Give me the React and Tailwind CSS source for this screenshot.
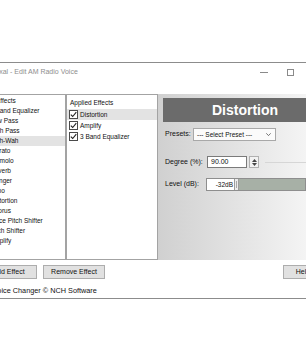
export default function App() {
  const effects = [
    "All Effects",
    "3 Band Equalizer",
    "Low Pass",
    "High Pass",
    "Wah-Wah",
    "Vibrato",
    "Tremolo",
    "Reverb",
    "Flanger",
    "Echo",
    "Distortion",
    "Chorus",
    "Voice Pitch Shifter",
    "Pitch Shifter",
    "Amplify",
  ];
  const applied = ["Distortion", "Amplify", "3 Band Equalizer"];

  const Check = () => (
    <span className="w-[9px] h-[9px] shrink-0 border border-[#4a4a4a] bg-white flex items-center justify-center">
      <svg width="7" height="7" viewBox="0 0 7 7">
        <path d="M0.8 3.6 L2.7 5.5 L6.3 1.2" fill="none" stroke="#222" strokeWidth="1.1" />
      </svg>
    </span>
  );

  return (
    <div className="w-[306px] h-[361px] overflow-hidden bg-white font-['Liberation_Sans',Arial,sans-serif] text-[#111]">
      <div className="h-[62px]" />
      <div className="border-t border-b border-[#8c8c8c] bg-white">
        {/* title bar */}
        <div className="h-[19px] flex items-center">
          <span className="-ml-[9px] text-[7px] text-[#8e8e8e] whitespace-nowrap">Voxal - Edit AM Radio Voice</span>
          <div className="ml-auto flex items-center mr-[12px]">
            <span className="w-[8px] h-px bg-[#8a8a8a]" />
            <span className="ml-[19px] w-[7px] h-[7px] border border-[#8a8a8a]" />
          </div>
        </div>

        {/* main row */}
        <div className="mt-[12px] h-[166px] flex">
          {/* left list */}
          <div className="w-[66px] shrink-0 border-t border-b border-r border-[#a3a3a3] overflow-hidden pt-[1px]">
            {effects.map((e, i) => (
              <div
                key={e}
                className={`h-[10px] leading-[10px] text-[6.5px] whitespace-nowrap ${i === 4 ? "bg-[#e3e3e3]" : ""}`}
              >
                <span className={`${i === 0 ? "-ml-[13px]" : "-ml-[10px]"} inline-block`}>{e}</span>
              </div>
            ))}
          </div>

          {/* applied list */}
          <div className="w-[92px] shrink-0 border border-[#a3a3a3] pt-[2px]">
            <div className="h-[12px] leading-[12px] pl-[3px] text-[6.5px] whitespace-nowrap">Applied Effects</div>
            {applied.map((a, i) => (
              <div
                key={a}
                className={`h-[11px] flex items-center pl-[2px] gap-[2px] text-[6.5px] whitespace-nowrap ${i === 0 ? "bg-[#e3e3e3]" : ""}`}
              >
                <Check />
                <span>{a}</span>
              </div>
            ))}
          </div>

          {/* effect panel */}
          <div className="flex-1 bg-linear-to-r from-[#d0d0d0] to-[#f4f4f4] pt-[4px] overflow-hidden">
            <div className="ml-[5px] w-[164px] h-[24px] bg-[#6b6b6b] flex items-center justify-center">
              <span className="text-[14px] font-bold text-white">Distortion</span>
            </div>

            <div className="pl-[7px] mt-[6px] h-[13px] flex items-center">
              <span className="w-[28px] shrink-0 text-[7px] whitespace-nowrap">Presets:</span>
              <div className="w-[83px] h-[13px] shrink-0 border border-[#a8a8a8] bg-[#fbfbfb] flex items-center justify-between pl-[3px] pr-[4px]">
                <span className="text-[6.5px] whitespace-nowrap">--- Select Preset ---</span>
                <svg width="5" height="3" viewBox="0 0 5 3">
                  <path d="M0.3 0.3 L2.5 2.6 L4.7 0.3" fill="none" stroke="#555" strokeWidth="0.8" />
                </svg>
              </div>
            </div>

            <div className="pl-[7px] mt-[15px] h-[12px] flex items-center">
              <span className="w-[42px] shrink-0 text-[7px] whitespace-nowrap">Degree (%):</span>
              <div className="w-[40px] h-[12px] shrink-0 border border-[#7a7a7a] bg-white flex items-center pl-[3px]">
                <span className="text-[7px]">90.00</span>
              </div>
              <div className="ml-[2px] w-[10px] h-[12px] shrink-0 border border-[#b0b0b0] bg-[#f2f2f2] flex flex-col items-center justify-center gap-[1px]">
                <svg width="5" height="3" viewBox="0 0 5 3">
                  <path d="M0 3 L2.5 0 L5 3 Z" fill="#444" />
                </svg>
                <svg width="5" height="3" viewBox="0 0 5 3">
                  <path d="M0 0 L2.5 3 L5 0 Z" fill="#444" />
                </svg>
              </div>
              <div className="ml-[6px] flex-1 h-px bg-[#d6d6d6]" />
            </div>

            <div className="pl-[7px] mt-[10px] h-[13px] flex items-center">
              <span className="w-[41px] shrink-0 text-[7px] whitespace-nowrap">Level (dB):</span>
              <div className="flex-1 h-[13px] border border-[#8e8e8e] flex">
                <div className="w-[27px] shrink-0 bg-white flex items-center justify-end pr-[1px]">
                  <span className="text-[6.5px]">-32dB</span>
                </div>
                <div className="w-[5px] shrink-0 bg-[#ececec] border-x border-[#9c9c9c] flex justify-center py-[2px]">
                  <span className="w-px h-full bg-[#a8a8a8]" />
                </div>
                <div className="flex-1 bg-[#a7b0a6]" />
              </div>
            </div>
          </div>
        </div>

        {/* buttons */}
        <div className="mt-[5px] h-[14px] flex">
          <div className="-ml-[20px] w-[57px] shrink-0 border border-[#adadad] bg-[#e1e1e1] flex items-center justify-center text-[7px] whitespace-nowrap">
            Add Effect
          </div>
          <div className="ml-[6px] w-[62px] shrink-0 border border-[#adadad] bg-[#e1e1e1] flex items-center justify-center text-[7px] whitespace-nowrap">
            Remove Effect
          </div>
          <div className="ml-auto -mr-[17px] w-[40px] shrink-0 border border-[#adadad] bg-[#e1e1e1] flex items-center justify-center text-[7px] whitespace-nowrap">
            Help
          </div>
        </div>

        {/* status */}
        <div className="mt-[5px] h-[14px] flex items-center">
          <span className="-ml-[27px] text-[7.3px] whitespace-nowrap">Voxal Voice Changer © NCH Software</span>
        </div>
      </div>
    </div>
  );
}
